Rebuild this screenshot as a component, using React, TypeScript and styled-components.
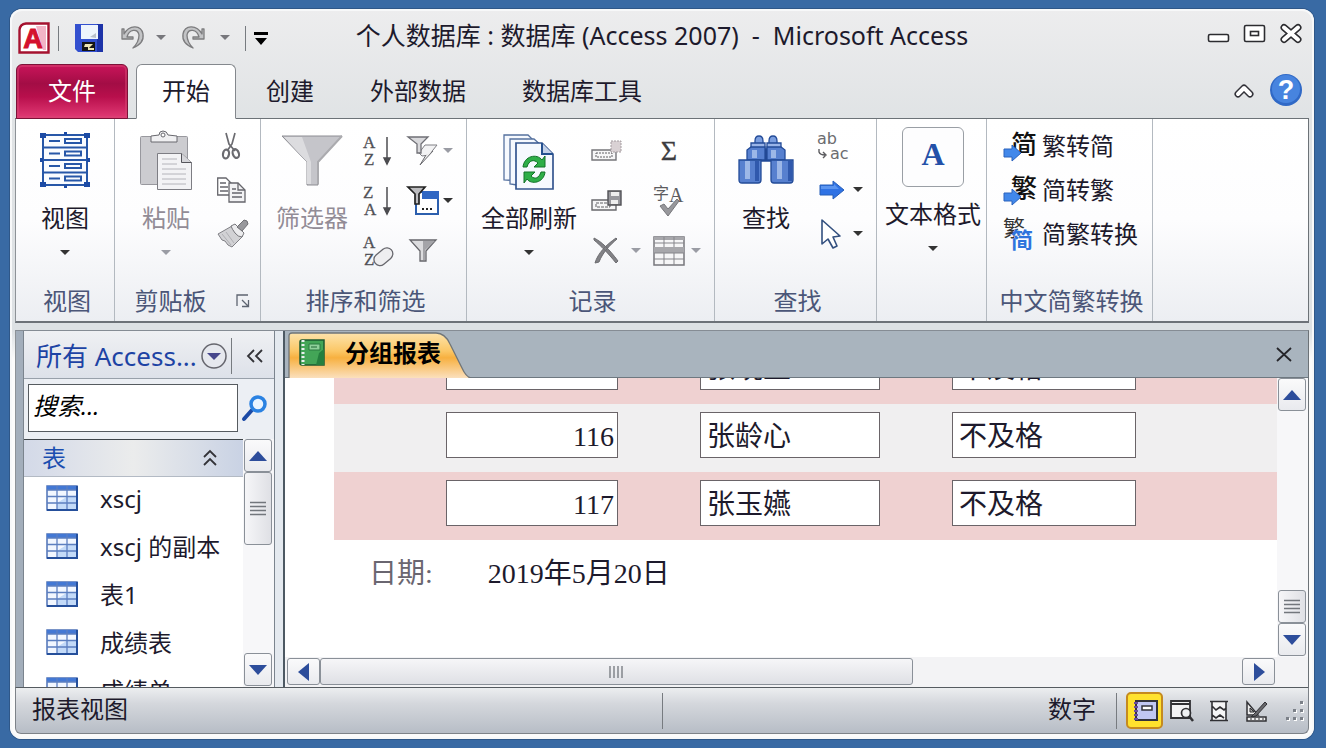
import React from "react";
import styled, { createGlobalStyle, css } from "styled-components";

const sans = `"Noto Sans", "Noto Sans CJK SC", sans-serif`;
const reportFont = `"Liberation Serif", "Noto Sans CJK SC", serif`;
const ink = "#1d1a2c";
const navy = "#4b5678";
const muted = "#928c96";

const GlobalStyle = createGlobalStyle`
  *, *::before, *::after { box-sizing: border-box; }
  body { margin: 0; font-family: ${sans}; font-size: 24px; line-height: 32px; color: ${ink}; }
  button, input { font: inherit; color: inherit; }
  svg { display: block; flex: none; overflow: visible; }
`;

const Desktop = styled.main`
  height: 100vh;
  display: flex;
  padding: 9px 12px 9px 10px;
  background: #396aa4;
`;

const Window = styled.div`
  flex: 1;
  min-width: 0;
  display: flex;
  flex-direction: column;
  padding: 0 5px 5px;
  border-radius: 12px;
  background: linear-gradient(#ededee, #e0e3e5 110px, #dde1e4 322px, #fbfbfb 350px);
  box-shadow: 0 0 0 1px #2f5788, inset 0 0 0 2px #f7f8f9;
  overflow: hidden;
`;

const plainButton = css`
  display: inline-flex;
  align-items: center;
  justify-content: center;
  padding: 0;
  border: 0;
  background: none;
  cursor: pointer;
`;

const IconButton = styled.button<{ $width?: number }>`
  ${plainButton}
  width: ${(p) => (p.$width ? `${p.$width}px` : "auto")};
`;

/* ---------- title bar ---------- */

const TitleBar = styled.header`
  flex: none;
  height: 55px;
  display: grid;
  grid-template-columns: 1fr auto 1fr;
  align-items: center;
`;

const QuickAccess = styled.div`
  display: flex;
  align-items: center;
  padding: 3px 0 0 3px;
  gap: 8px;
`;

const Separator = styled.span<{ $height: number; $before?: number; $after?: number }>`
  flex: none;
  width: 1px;
  height: ${(p) => p.$height}px;
  margin: 0 ${(p) => p.$after ?? 0}px 0 ${(p) => p.$before ?? 0}px;
  background: #777b80;
`;

const Title = styled.h1`
  margin: 0;
  padding-bottom: 4px;
  font-size: 25px;
  font-weight: 400;
  white-space: nowrap;
`;

const WindowControls = styled.div`
  display: flex;
  justify-content: flex-end;
  align-items: center;
  gap: 12px;
  padding: 0 6px 6px 0;
`;

/* ---------- ribbon tabs ---------- */

const TabRow = styled.nav`
  flex: none;
  height: 55px;
  display: flex;
  padding-left: 1px;
  box-shadow: inset 0 -1px 0 #6c7277;
`;

const FileTab = styled.button`
  ${plainButton}
  width: 112px;
  margin-right: 8px;
  padding-bottom: 2px;
  color: #fff;
  border: 1px solid #7c1238;
  border-radius: 6px 6px 0 0;
  background: linear-gradient(#c9145a, #a30d45 35%, #b80f4c 60%, #e23a75);
  box-shadow: inset 0 0 0 2px #d8457480;
`;

const Tab = styled.button<{ $active?: boolean }>`
  ${plainButton}
  padding: 0 28px 2px;
  ${(p) =>
    p.$active &&
    css`
      padding: 0 25px 2px;
      margin-right: 2px;
      border: 1px solid #84888d;
      border-bottom-color: #fff;
      border-radius: 6px 6px 0 0;
      background: #fff;
    `}
`;

const TabTools = styled.div`
  margin-left: auto;
  display: flex;
  align-items: center;
  gap: 16px;
  padding: 0 7px 4px 0;
`;

/* ---------- ribbon ---------- */

const Ribbon = styled.section`
  flex: none;
  height: 204px;
  display: flex;
  background: linear-gradient(#fff, #fdfdfe 50%, #eceef2);
  border-right: 1px solid #6c7277;
  border-left: 1px solid #8d9297;
  border-bottom: 2px solid #6d7278;
`;

const Group = styled.section<{ $width: number }>`
  flex: none;
  width: ${(p) => p.$width}px;
  display: flex;
  flex-direction: column;
  border-right: 1px solid #b3b9c0;
`;

const GroupBody = styled.div`
  flex: 1;
  display: flex;
  align-items: flex-start;
`;

const GroupLabel = styled.div<{ $launcher?: boolean }>`
  height: 36px;
  display: flex;
  align-items: center;
  justify-content: center;
  gap: 10px;
  padding: 0 ${(p) => (p.$launcher ? "10px 4px 0" : "0 4px 4px")};
  color: ${navy};
  white-space: nowrap;

  span {
    flex: 1;
    text-align: center;
  }
`;

const BigButton = styled.button<{ $width: number; $raised?: boolean; $muted?: boolean }>`
  ${plainButton}
  flex: none;
  width: ${(p) => p.$width}px;
  flex-direction: column;
  justify-content: flex-start;
  padding-top: ${(p) => (p.$raised ? 8 : 12)}px;
  color: ${(p) => (p.$muted ? muted : ink)};
  white-space: nowrap;

  span {
    margin: 11px 0 16px;
  }
`;

const SmallColumn = styled.div<{ $row: number; $gap?: number }>`
  flex: none;
  margin-left: ${(p) => p.$gap ?? 0}px;
  padding-top: ${(p) => (p.$row === 50 ? 7 : 5)}px;
  display: flex;
  flex-direction: column;

  button {
    height: ${(p) => p.$row}px;
    justify-content: flex-start;
    gap: 4px;
  }
`;

const FormatFrame = styled.span`
  && {
    width: 62px;
    height: 60px;
    margin: 0;
    padding-bottom: 6px;
    display: grid;
    place-items: center;
    border: 1px solid #9a9fa5;
    border-radius: 6px;
    background: #fdfdfe;
    font: 700 32px/32px "Liberation Serif", serif;
    color: #2450a8;
  }
`;

const ConvertButton = styled.button`
  ${plainButton}
  white-space: nowrap;
`;

/* ---------- work area ---------- */

const Work = styled.div`
  flex: 1;
  min-height: 0;
  display: flex;
  margin-top: 7px;
  border-top: 1px solid #858c94;
  border-right: 1px solid #6c7277;
  border-left: 1px solid #8d9297;
`;

const NavPane = styled.aside`
  flex: none;
  width: 269px;
  display: flex;
  padding: 0 8px 0 7px;
  background: linear-gradient(90deg, #a3aebb 0 7px, #e4e9ef 7px);
  border-right: 2px solid #4d5963;
`;

const NavInner = styled.div`
  flex: 1;
  min-width: 0;
  display: flex;
  flex-direction: column;
  border: solid #7b848e;
  border-width: 0 1px;
  background: #eceff4;
`;

const NavHeader = styled.div`
  flex: none;
  height: 48px;
  display: flex;
  align-items: center;
  padding: 2px 0 0 12px;
  gap: 4px;
  font-size: 26px;
  color: #1d43a4;
  background: linear-gradient(#eff0f3, #dde1e9);
  border-bottom: 1px solid #98a0aa;
  white-space: nowrap;
`;

const SearchRow = styled.form`
  flex: none;
  display: flex;
  align-items: center;
  height: 60px;
  padding: 0 0 2px 4px;
  gap: 4px;
`;

const SearchInput = styled.input`
  width: 210px;
  height: 48px;
  padding: 0 4px 6px;
  border: 1px solid #565b60;
  border-radius: 0;
  background: #fff;
  outline: 0;

  &::placeholder {
    color: #000;
    font-style: italic;
    opacity: 1;
  }
`;

const NavList = styled.div`
  flex: 1;
  min-height: 0;
  display: flex;
`;

const Objects = styled.div`
  flex: 1;
  min-width: 0;
  overflow: hidden;
  background: #fff;
  border-top: 1px solid #3f454a;
`;

const ObjectGroup = styled.button`
  ${plainButton}
  width: 100%;
  height: 37px;
  justify-content: space-between;
  padding: 0 26px 0 18px;
  color: #1b4eb0;
  background: linear-gradient(90deg, #d3d9e8, #ebecec 50%, #c9d2e4);
  border-bottom: 1px solid #b3bac4;
`;

const ObjectList = styled.ul`
  margin: 0;
  padding: 0;
  list-style: none;
`;

const ObjectLink = styled.a`
  display: flex;
  align-items: center;
  gap: 22px;
  height: 48px;
  padding: 0 0 6px 22px;
  color: inherit;
  text-decoration: none;
  white-space: nowrap;

  span {
    padding-top: 2px;
  }
`;

/* ---------- scroll bars ---------- */

const ScrollBar = styled.div<{ $horizontal?: boolean }>`
  flex: none;
  display: flex;
  flex-direction: ${(p) => (p.$horizontal ? "row" : "column")};
  ${(p) => (p.$horizontal ? "height: 30px; padding: 1px 33px 2px 2px;" : "width: 31px; padding: 0 2px 1px 1px;")}
  background: ${(p) => (p.$horizontal ? "#f3f3f5" : "#f7f7f9")};
`;

const ScrollButton = styled.button`
  ${plainButton}
  flex: none;
  height: 33px;
  border: 1px solid #8a9098;
  border-radius: 3px;
  background: linear-gradient(#fafafb, #e9eaee);
`;

const SideButton = styled(ScrollButton)`
  width: 33px;
  height: 27px;
`;

const Thumb = styled.div<{ $length: string; $horizontal?: boolean }>`
  flex: none;
  display: grid;
  place-items: center;
  ${(p) => (p.$horizontal ? `width: ${p.$length};` : `height: ${p.$length};`)}
  border: 1px solid #8a9098;
  border-radius: 3px;
  background: linear-gradient(${(p) => (p.$horizontal ? "180deg" : "90deg")}, #f6f6f8, #dfe0e5);
`;

const Spring = styled.div`
  flex: 1;
`;

/* ---------- document ---------- */

const Document = styled.section`
  flex: 1;
  min-width: 0;
  display: flex;
  flex-direction: column;
  background: #fff;
`;

const DocTabs = styled.div`
  flex: none;
  height: 47px;
  display: flex;
  justify-content: space-between;
  padding: 1px 16px 0 4px;
  background: #a9b4be;
  border-bottom: 1px solid #6e7880;
`;

const DocTab = styled.button`
  ${plainButton}
  display: grid;
  justify-content: start;
  width: 182px;
  height: 46px;
  font-weight: 700;
  color: #000;

  > * {
    grid-area: 1 / 1;
  }
`;

const DocTabFace = styled.span`
  display: flex;
  align-items: center;
  gap: 20px;
  padding: 0 0 5px 10px;
  white-space: nowrap;
`;

const Viewport = styled.div`
  flex: 1;
  min-height: 0;
  display: flex;
`;

const Page = styled.div`
  flex: 1;
  min-width: 0;
  display: flex;
  flex-direction: column;
  justify-content: flex-end;
  padding-left: 49px;
  overflow: hidden;
  font-family: ${reportFont};
  font-size: 28px;
`;

const ReportTable = styled.table`
  flex: none;
  width: 100%;
  table-layout: fixed;
  border-collapse: collapse;
`;

const ReportRow = styled.tr`
  height: 68px;
  background: #f0eff0;

  &:nth-child(odd) {
    background: #efd1d1;
  }
`;

const Cell = styled.td<{ $lead: number; $right?: boolean }>`
  padding: 8px 0 14px ${(p) => p.$lead}px;
  text-align: ${(p) => (p.$right ? "right" : "left")};
`;

const Field = styled.div<{ $right?: boolean }>`
  height: 46px;
  padding: 8px ${(p) => (p.$right ? 3 : 6)}px 0;
  border: 1px solid #6a6468;
  background: #fff;
  white-space: nowrap;
`;

const ReportFooter = styled.dl`
  flex: none;
  display: flex;
  gap: 55px;
  height: 117px;
  margin: 0;
  padding: 18px 35px;

  dt {
    color: #6a6670;
  }

  dd {
    margin: 0;
  }
`;

/* ---------- status bar ---------- */

const StatusBar = styled.footer`
  flex: none;
  height: 47px;
  display: flex;
  align-items: center;
  border: 1px solid #7d8288;
  border-top-color: #555b60;
  border-radius: 0 0 6px 6px;
  background: linear-gradient(#eceef0, #d4d7dc 35%, #b7bdc6);
`;

const StatusHalf = styled.div<{ $end?: boolean }>`
  flex: 1;
  display: flex;
  align-items: center;
  justify-content: ${(p) => (p.$end ? "flex-end" : "flex-start")};

  > span:first-child {
    padding: 0 0 4px 16px;
  }
`;

const ViewButton = styled.button<{ $active?: boolean }>`
  ${plainButton}
  width: 37px;
  height: 37px;
  ${(p) =>
    p.$active &&
    css`
      border: 2px solid #c58a1f;
      border-radius: 5px;
      background: #ffe22e;
    `}
`;

/* ---------- icons ---------- */

const Caret = ({ color = "#333" }: { color?: string }) => (
  <svg width="10" height="6" viewBox="0 0 10 6"><path d="M0 0h10L5 5z" fill={color} /></svg>
);

const AccessLogo = () => (
  <svg width="32" height="32" viewBox="0 0 32 32">
    <path d="M8 1.500H30.500V30.500H1.500V8Q2 2 8 1.500Z" fill="#fff" stroke="#a5122f" strokeWidth="2.400" />
    <path d="M18 4h10v24h-3z" fill="#f3b4c6" />
    <text x="15" y="26" textAnchor="middle" fontFamily="Liberation Sans, sans-serif" fontWeight="700" fontSize="27" fill="#d4112d" stroke="#d4112d">A</text>
  </svg>
);

const SaveIcon = () => (
  <svg width="28" height="28" viewBox="0 0 28 28">
    <path d="M0 0h28v28H3l-3-3z" fill="#3350cf" />
    <path d="M22 0h6v28h-6z" fill="#1d33a8" />
    <path d="M6 1h17v14H6z" fill="#eef4fc" />
    <path d="M15 13l6-4v5z" fill="#b8bfca" />
    <path d="M7 18h13v9H7z" fill="#151515" />
    <path d="M10 20h8l-4 4h5v2h-6v-3H9z" fill="#efe7b4" />
  </svg>
);

const UndoIcon = ({ flip = false }: { flip?: boolean }) => (
  <svg width="24" height="26" viewBox="0 0 24 26">
    <g transform={flip ? "matrix(-1 0 0 1 24 0)" : undefined} stroke="#7d7d7f" strokeWidth="1.300" fill="#c3c4c6" strokeLinejoin="round">
      <path d="M1 4v10h11v-2H6C8 4 17 3 18 10c0 6-2 9-6 13 7-3 11-8 10-14C20-1 8 0 3 9V4z" />
    </g>
  </svg>
);

const CustomizeIcon = () => (
  <svg width="14" height="13" viewBox="0 0 14 13"><path d="M0 0h14v3H0zM1 6h12l-6 7z" fill="#000" /></svg>
);

const MinimizeIcon = () => (
  <svg width="24" height="20" viewBox="0 0 24 20"><rect x="1.500" y="10.500" width="20" height="7" rx="1.500" fill="#fff" stroke="#2c2c30" strokeWidth="1.600" /></svg>
);
const MaximizeIcon = () => (
  <svg width="24" height="20" viewBox="0 0 24 20">
    <rect x="1.500" y="1.500" width="20" height="16" rx="1.500" fill="#fff" stroke="#2c2c30" strokeWidth="1.600" />
    <rect x="7.500" y="7.500" width="8" height="4" fill="#fff" stroke="#2c2c30" strokeWidth="1.600" />
  </svg>
);
const CloseIcon = () => (
  <svg width="24" height="20" viewBox="0 0 24 20">
    <path d="M5 3.500l14 12M19 3.500l-14 12" stroke="#2c2c30" strokeWidth="7" strokeLinecap="round" />
    <path d="M5 3.500l14 12M19 3.500l-14 12" stroke="#fff" strokeWidth="4" strokeLinecap="round" />
  </svg>
);
const CollapseIcon = () => (
  <svg width="20" height="16" viewBox="0 0 20 16">
    <path d="M4 12l6-6 6 6" fill="none" stroke="#33333a" strokeWidth="7" strokeLinecap="round" strokeLinejoin="round" />
    <path d="M4 12l6-6 6 6" fill="none" stroke="#fff" strokeWidth="4" strokeLinecap="round" strokeLinejoin="round" />
  </svg>
);
const HelpIcon = () => (
  <svg width="32" height="32" viewBox="0 0 32 32">
    <circle cx="16" cy="16" r="16" fill="#3069c6" />
    <circle cx="16" cy="15" r="14" fill="#4784df" />
    <text x="16" y="25" textAnchor="middle" fontFamily="Liberation Sans, sans-serif" fontWeight="700" fontSize="27" fill="#fff">?</text>
  </svg>
);

const ViewIcon = () => (
  <svg width="50" height="60" viewBox="0 0 50 60">
    <g fill="none" stroke="#2757a8" strokeWidth="2">
      <path d="M3 4h44v50H3zM3 16.500h44M3 29h44M3 41.500h44" fill="#fafcff" />
      <path d="M9 10h11M9 22.500h11M9 35h11M9 47.500h11" />
      <path d="M25 8h16v4H25zM25 20.500h16v4H25zM25 33h16v4H25zM25 45.500h16v4H25z" />
    </g>
    <path d="M0 2h6v5H0zM44 2h6v5h-6zM0 51h6v5H0zM44 51h6v5h-6zM24 1h3v3h-3zM24 54h3v3h-3zM0 27h3v4H0zM47 27h3v4h-3z" fill="#1c4ba5" />
  </svg>
);

const PasteIcon = () => (
  <svg width="52" height="60" viewBox="0 0 52 60">
    <rect x=".5" y="5.500" width="47" height="48" rx="1" fill="#ccccd0" stroke="#98989e" />
    <path d="M11 11V5l8-1q0-4 4-4t5 4l9 1v6z" fill="#f0f0f2" stroke="#68686e" />
    <circle cx="23" cy="4" r="2" fill="#fff" stroke="#68686e" />
    <path d="M17.500 22.500h24l10 9v27h-34z" fill="#f3f3f5" stroke="#7d7d83" />
    <path d="M41.500 22.500v9h10" fill="#d5d5d9" stroke="#55555b" />
    <path d="M22 28h15M22 33h15M22 38h24M22 43h24M22 48h24M22 53h24" stroke="#b4b4ba" />
  </svg>
);

const CutIcon = () => (
  <svg width="28" height="28" viewBox="0 0 28 28">
    <g fill="none" stroke="#6b6b70" strokeWidth="1.700">
      <path d="M9 1l3 11 6 7M18 1l-3 11-5 7" />
      <ellipse cx="9" cy="22" rx="3" ry="4.500" transform="rotate(10 9 22)" strokeWidth="2.200" />
      <ellipse cx="19" cy="21.500" rx="3" ry="4.500" transform="rotate(-20 19 22)" strokeWidth="2.200" />
    </g>
  </svg>
);
const CopyIcon = () => (
  <svg width="28" height="26" viewBox="0 0 28 26">
    <g stroke="#66666c" strokeWidth="1.300">
      <path d="M.7 1H9l5 5v12H.7z" fill="#fff" />
      <path d="M3 6h6M3 10h8M3 14h8" />
      <path d="M12 6h9l7 7v12H12z" fill="#f2f2f4" />
      <path d="M21 6v7h7M15 12h4M15 16h10M15 20h10" fill="none" />
    </g>
  </svg>
);
const BrushIcon = () => (
  <svg width="32" height="28" viewBox="0 0 32 28">
    <path d="M15 6l11 10-11 11-4-2-3-4-3-1-4-6z" fill="#d2d2d5" stroke="#808085" strokeLinejoin="round" />
    <path d="M5 14l9 11M9 12l8 11" stroke="#b0b0b4" />
    <path d="M14 6l4-2 9 9-2 4q-4 0-7-4t-4-7z" fill="#ececee" stroke="#77777c" />
    <path d="M20 7l7-7q4 0 4 4l-6 7z" fill="#98989c" stroke="#707075" />
  </svg>
);
const LauncherIcon = () => (
  <svg width="14" height="14" viewBox="0 0 14 14"><path d="M1 12V1h11M6 6l6 6M12.500 6v6.500H6" fill="none" stroke="#5d6470" strokeWidth="1.300" /></svg>
);

const BigFunnel = () => (
  <svg width="62" height="60" viewBox="0 0 62 60">
    <path d="M1 5h60L37 31v23H26V31z" fill="#c5c5ca" stroke="#8c8c92" />
    <path d="M3 6h18l9 25v22h-4V31z" fill="#dcdcdf" />
    <path d="M61 5L37 31v22" fill="none" stroke="#ababaf" strokeWidth="2" />
  </svg>
);

const SortIcon = ({ top, bottom, erase = false }: { top: string; bottom: string; erase?: boolean }) => (
  <svg width="32" height="34" viewBox="0 0 32 34">
    <g fontFamily="Liberation Serif, serif" fontSize="17" fill="#515156" stroke="#515156" strokeWidth=".3">
      <text x="0" y="14">{top}</text>
      <text x="1" y="31">{bottom}</text>
    </g>
    {erase ? (
      <rect x="10" y="17" width="21" height="12" rx="6" transform="rotate(-40 20 23)" fill="#eeeef0" stroke="#68686e" strokeWidth="1.300" />
    ) : (
      <path d="M24 3v25M21 24l3 6 3-6z" fill="#4c4c50" stroke="#4c4c50" strokeWidth="1.500" />
    )}
  </svg>
);

const SelectionFilterIcon = () => (
  <svg width="32" height="30" viewBox="0 0 32 30">
    <path d="M12 17l6-8h12l-8 10-7 1z" fill="#f3f3f4" stroke="#808085" />
    <path d="M26 15L13 29l6-10" fill="#eee" stroke="#69696e" />
    <path d="M1 1h20l-7 7v9h-4V8z" fill="#d9d9dc" stroke="#6f6f75" strokeWidth="1.300" />
  </svg>
);
const AdvancedFilterIcon = () => (
  <svg width="32" height="30" viewBox="0 0 32 30">
    <rect x="9" y="6" width="22" height="22" fill="#fff" stroke="#2c5fae" strokeWidth="2" />
    <path d="M15 5h17v8H15z" fill="#2f66c3" />
    <path d="M15 22h2v2h-2zM19 22h2v2h-2zM23 22h2v2h-2z" fill="#222" />
    <path d="M1 1h17l-6 7v10H8V8z" fill="#bcbcbf" stroke="#222" strokeWidth="1.700" />
  </svg>
);
const SmallFunnel = () => (
  <svg width="32" height="24" viewBox="0 0 32 24">
    <path d="M3 1h26L19 12v10h-6V12z" fill="#dcdcde" stroke="#66666b" strokeWidth="1.300" />
    <path d="M16 2h12L18 11v10h-2z" fill="#a4a4a8" />
  </svg>
);

const RefreshAllIcon = () => (
  <svg width="52" height="60" viewBox="0 0 52 60">
    <g fill="#f6f9fe" stroke="#55719f" strokeWidth="1.300">
      <path d="M1 4h24l10 10v38l-9-2-25-1z" />
      <path d="M7 8h24l10 9v37H14l-7-1z" />
      <path d="M13 12h26l11 11v35H13z" stroke="#34558f" strokeWidth="1.700" />
      <path d="M39 12v11h11" fill="#c3d1e8" stroke="#24508f" strokeWidth="2" />
    </g>
    <g fill="#2eae48" stroke="#127329">
      <path d="M20 36c1-11 14-14 19-7l3-4v11H31l4-4c-4-4-9-3-11 4z" />
      <path d="M42 41c-1 11-14 13-18 7l-3 4V41h11l-4 4c4 4 8 2 10-4z" />
    </g>
  </svg>
);

const NewRecordIcon = () => (
  <svg width="32" height="24" viewBox="0 0 32 24">
    <path d="M1 11h24v10H1z" fill="#f6f6f7" stroke="#75757a" strokeWidth="1.400" />
    <path d="M5 14h16v4H5z" fill="none" stroke="#606065" strokeDasharray="2 1" />
    <path d="M20 2h10v11H20z" fill="#d9d1d4" stroke="#a49ca0" strokeDasharray="2 1" />
  </svg>
);
const SaveRecordIcon = () => (
  <svg width="32" height="24" viewBox="0 0 32 24">
    <path d="M1 11h24v10H1z" fill="#f6f6f7" stroke="#68686c" strokeWidth="1.400" />
    <path d="M5 14h14v4H5z" fill="none" stroke="#606065" strokeDasharray="3 1" />
    <path d="M17 2h13v14H17z" fill="#98989d" stroke="#515156" strokeWidth="1.400" />
    <path d="M20 3h8v4h-8zM20 11h7v4h-7z" fill="#eee" />
  </svg>
);
const DeleteIcon = () => (
  <svg width="36" height="28" viewBox="0 0 36 28">
    <path d="M3 1c8 4 15 11 24 23l-2 2C17 16 10 9 3 3zM26 2C19 8 12 15 8 25l-4 1C7 16 15 8 25 1z" fill="#828286" stroke="#6c6c70" />
  </svg>
);
const SumIcon = () => (
  <svg width="32" height="30" viewBox="0 0 32 30">
    <text x="16" y="24" textAnchor="middle" fontFamily="Liberation Serif, serif" fontSize="28" fill="#3c3c40" stroke="#3c3c40" strokeWidth=".3">Σ</text>
  </svg>
);
const SpellIcon = () => (
  <svg width="32" height="32" viewBox="0 0 32 32">
    <text x="0" y="14" fontFamily="Noto Sans CJK SC, sans-serif" fontSize="16" fill="#5c5c60">字</text>
    <text x="16" y="17" fontFamily="Liberation Serif, serif" fontSize="20" fill="#5c5c60">A</text>
    <path d="M7 21l4-2 4 5 9-10 2 2-11 15z" fill="#98989c" stroke="#77777b" />
  </svg>
);
const MoreIcon = () => (
  <svg width="34" height="30" viewBox="0 0 34 30">
    <path d="M1 1h30v28H1z" fill="#f6f6f7" stroke="#77777c" strokeWidth="1.500" />
    <path d="M1 1h30v3H1zM1 11h30v6H1z" fill="#a7a7ab" />
    <path d="M1 7h30M1 17h30M1 23h30M11 1v10M21 1v10M11 17v12M21 17v12" stroke="#85858a" />
  </svg>
);

const BinocularsIcon = () => (
  <svg width="56" height="60" viewBox="0 0 56 60">
    <g stroke="#234b98" strokeWidth="1.300" fill="#5780cf">
      <path d="M22 18h12v12H22z" fill="#23468e" />
      <path d="M17 10q0-5 4-5t4 5v4h-8zM31 10q0-5 4-5t4 5v4h-8z" fill="#7b9edf" />
      <path d="M13 12h14v5H13zM29 12h14v5H29z" fill="#9ab5e8" />
      <path d="M9 29V19l4-3h14v13zM47 29V19l-4-3H29v13z" />
      <path d="M1 29h22v20q0 3-3 3H4q-3 0-3-3zM33 29h22v20q0 3-3 3H36q-3 0-3-3z" />
    </g>
    <path d="M7 30h5v18H7zM39 30h5v18h-5zM14 19h5v8h-5zM33 19h5v8h-5z" fill="#b3c9ef" opacity=".75" />
    <path d="M17 30h4v20h-4zM50 30h4v20h-4z" fill="#3059ad" />
  </svg>
);
const ReplaceIcon = () => (
  <svg width="32" height="32" viewBox="0 0 32 32">
    <g fontFamily="DejaVu Sans, sans-serif" fontSize="16" fill="#6c6c70">
      <text x="0" y="14">ab</text>
      <text x="13" y="29">ac</text>
    </g>
    <path d="M2 19v3q1 3 6 3M6 22l3 3-3 3" fill="none" stroke="#5c5c60" strokeWidth="1.400" />
  </svg>
);
const GotoIcon = () => (
  <svg width="32" height="20" viewBox="0 0 32 20">
    <path d="M3 5h13V1l11 9-11 9v-4H3z" fill="#2f72e4" stroke="#275eb8" />
    <path d="M4 6h13V4l5 5H4z" fill="#5b95f0" />
  </svg>
);
const PointerIcon = () => (
  <svg width="32" height="32" viewBox="0 0 32 32">
    <path d="M5 2v24l6-5 5 9 4-2-4-9 7-1z" fill="#fff" stroke="#33507f" strokeWidth="1.600" strokeLinejoin="round" />
  </svg>
);

const ConvertIcon = ({ glyph }: { glyph: string }) => (
  <svg width="36" height="36" viewBox="0 0 36 36">
    <text x="9" y="26" fontFamily="Noto Sans CJK SC, sans-serif" fontWeight="500" fontSize="26" fill="#111">{glyph}</text>
    <path d="M2 21h8v-4l9 8-9 8v-4H2z" fill="#4288ea" stroke="#2b63bd" />
  </svg>
);
const ConvertBothIcon = () => (
  <svg width="36" height="36" viewBox="0 0 36 36">
    <text x="1" y="20" fontFamily="Noto Sans CJK SC, sans-serif" fontSize="22" fill="#333">繁</text>
    <path d="M12 14h18v20H12z" fill="#fff" opacity=".6" />
    <text x="9" y="32" fontFamily="Noto Sans CJK SC, sans-serif" fontWeight="700" fontSize="22" fill="#2f74dd">简</text>
  </svg>
);

const DropCircle = () => (
  <svg width="26" height="26" viewBox="0 0 26 26">
    <circle cx="13" cy="13" r="12" fill="#e6e8ee" stroke="#66666e" strokeWidth="1.500" />
    <path d="M6 10h14l-7 7z" fill="#46468c" />
  </svg>
);
const ChevronsLeft = () => (
  <svg width="18" height="14" viewBox="0 0 18 14"><path d="M8 1L2 7l6 6M16 1l-6 6 6 6" fill="none" stroke="#333338" strokeWidth="1.800" /></svg>
);
const ChevronsUp = () => (
  <svg width="14" height="16" viewBox="0 0 14 16"><path d="M1 7l6-6 6 6M1 15l6-6 6 6" fill="none" stroke="#333338" strokeWidth="1.800" /></svg>
);
const SearchIcon = () => (
  <svg width="26" height="26" viewBox="0 0 26 26">
    <path d="M2 24l8-9" stroke="#1c4aa6" strokeWidth="4" strokeLinecap="round" />
    <circle cx="16" cy="9" r="7" fill="#eaf4ff" stroke="#2b82e2" strokeWidth="3.500" />
  </svg>
);
const TableIcon = () => (
  <svg width="32" height="26" viewBox="0 0 32 26">
    <path d="M1 1h30v24H1z" fill="#f2f7ff" stroke="#4e71b6" strokeWidth="1.500" />
    <path d="M1 1h30v4H1z" fill="#4378d4" />
    <path d="M22 11h9v14H11v-7z" fill="#c3daf8" />
    <path d="M1 5h30M1 11.500h30M1 18h30M11 1v24M21 1v24" stroke="#5c7fc0" strokeWidth="1.300" />
    <path d="M31 1v24H1" fill="none" stroke="#254f9b" strokeWidth="2" />
  </svg>
);

const triangles = { up: "M0 12L9 2l9 10z", down: "M0 2h18L9 12z", left: "M14 0v18L3 9z", right: "M4 0v18l11-9z" };
const Triangle = ({ dir }: { dir: keyof typeof triangles }) => (
  <svg width="18" height={dir === "up" || dir === "down" ? 14 : 18}><path d={triangles[dir]} fill="#2d4d9b" /></svg>
);
const Grip = ({ upright = false }: { upright?: boolean }) => (
  <svg width="16" height="16" viewBox="0 0 16 16">
    <path d={upright ? "M2 2v12M6 2v12M10 2v12M14 2v12" : "M0 1.500h16M0 5.500h16M0 9.500h16M0 13.500h16"} stroke="#72767c" strokeWidth="1.300" />
  </svg>
);

const DocTabShape = () => (
  <svg width="182" height="46" viewBox="0 0 182 46">
    <defs>
      <linearGradient id="tabFill" x1="0" y1="0" x2="0" y2="1">
        <stop offset="0" stopColor="#fde3ab" />
        <stop offset=".4" stopColor="#fbc766" />
        <stop offset=".55" stopColor="#f7b040" />
        <stop offset="1" stopColor="#fbe0bd" />
      </linearGradient>
    </defs>
    <path d="M0 46V4q0-3 3-3h144q9 0 14 11l12 24q4 9 9 10z" fill="url(#tabFill)" />
    <path d="M0 46V4q0-3 3-3h144q9 0 14 11l12 24q4 9 9 10" fill="none" stroke="#707578" strokeWidth="1.300" />
  </svg>
);
const ReportIcon = () => (
  <svg width="26" height="28" viewBox="0 0 26 28">
    <path d="M3 1h22v25H3q-2 0-2-2V3q0-2 2-2z" fill="#43a557" stroke="#1c5a32" strokeWidth="1.500" />
    <path d="M4 1v25" stroke="#ebeff0" strokeWidth="3" strokeDasharray="2 2" />
    <path d="M10 5h11v6H10z" fill="#8fd09a" stroke="#2a7a40" />
    <path d="M12 8h6" stroke="#1f6634" />
    <path d="M20 14l5-4v16h-8z" fill="#257f3e" />
  </svg>
);
const DocCloseIcon = () => (
  <svg width="16" height="14" viewBox="0 0 16 14"><path d="M1 0l14 13M15 0L1 13" stroke="#25252a" strokeWidth="1.800" /></svg>
);

const ReportViewIcon = () => (
  <svg width="26" height="22" viewBox="0 0 26 22">
    <path d="M4 1h21v19H4z" fill="#c1c7f2" stroke="#33333b" strokeWidth="2" />
    <path d="M4 2v18" stroke="#694ca0" strokeWidth="4" strokeDasharray="2 2" />
    <path d="M10 6h10v4H10z" fill="#fff" stroke="#33333b" strokeWidth="1.500" />
  </svg>
);
const PreviewIcon = () => (
  <svg width="26" height="22" viewBox="0 0 26 22">
    <path d="M2 1h19v17H2zM2 4h19" fill="#f2f2f4" stroke="#303034" strokeWidth="1.800" />
    <circle cx="17" cy="13" r="4.500" fill="#eef0f2" stroke="#303034" strokeWidth="1.700" />
    <path d="M20 16l4 5" stroke="#303034" strokeWidth="2.500" />
  </svg>
);
const LayoutIcon = () => (
  <svg width="22" height="22" viewBox="0 0 22 22">
    <path d="M4 1h14v20H4z" fill="#f5f5f6" />
    <path d="M2 1.500h18M2 20.500h18M4 1v20M18 1v20M4 6l4 4 4-3 4 3 2-2M4 15l4 3 4-3 4 3" fill="none" stroke="#303034" strokeWidth="1.600" />
  </svg>
);
const DesignIcon = () => (
  <svg width="22" height="22" viewBox="0 0 22 22">
    <path d="M2 2v13h11z" fill="#eee" stroke="#303034" strokeWidth="1.500" />
    <path d="M5 8v4h4z" fill="#aaa" stroke="#303034" />
    <path d="M20 2L10 13l-4 4 5-1L22 4z" fill="#68686c" stroke="#303034" />
    <path d="M2 17h19v4H2z" fill="#eee" stroke="#303034" strokeWidth="1.500" />
    <path d="M6 18v2M10 18v2M14 18v2M18 18v2" stroke="#303034" />
  </svg>
);
const ResizeGrip = () => (
  <svg width="22" height="22" viewBox="0 0 22 22">
    {[[20, 1], [13, 9], [20, 9], [6, 17], [13, 17], [20, 17]].map(([x, y]) => (
      <g key={`${x}-${y}`}>
        <rect x={x + 1} y={y + 1} width="3" height="3" fill="#fff" />
        <rect x={x} y={y} width="3" height="3" fill="#7b8088" />
      </g>
    ))}
  </svg>
);

/* ---------- data ---------- */

const objects = ["xscj", "xscj 的副本", "表1", "成绩表", "成绩单"];
const rows = [
  { id: 115, name: "张晓玉", grade: "不及格" },
  { id: 116, name: "张龄心", grade: "不及格" },
  { id: 117, name: "张玉嬿", grade: "不及格" },
];

const softCaret = "#9a9ca4";

export default function App() {
  return (
    <Desktop>
      <GlobalStyle />
      <Window>
        <TitleBar>
          <QuickAccess>
            <AccessLogo />
            <Separator $height={25} />
            <IconButton $width={44} aria-label="保存"><SaveIcon /></IconButton>
            <IconButton $width={28} aria-label="撤消"><UndoIcon /></IconButton>
            <IconButton $width={12} aria-label="撤消列表"><Caret color="#77777c" /></IconButton>
            <IconButton $width={36} aria-label="恢复"><UndoIcon flip /></IconButton>
            <IconButton $width={12} aria-label="恢复列表"><Caret color="#77777c" /></IconButton>
            <Separator $height={25} $before={6} />
            <IconButton aria-label="自定义快速访问工具栏"><CustomizeIcon /></IconButton>
          </QuickAccess>
          <Title>个人数据库 : 数据库 (Access 2007)&nbsp; -&nbsp; Microsoft Access</Title>
          <WindowControls>
            <IconButton aria-label="最小化"><MinimizeIcon /></IconButton>
            <IconButton aria-label="最大化"><MaximizeIcon /></IconButton>
            <IconButton aria-label="关闭"><CloseIcon /></IconButton>
          </WindowControls>
        </TitleBar>

        <TabRow>
          <FileTab>文件</FileTab>
          <Tab $active>开始</Tab>
          <Tab>创建</Tab>
          <Tab>外部数据</Tab>
          <Tab>数据库工具</Tab>
          <TabTools>
            <IconButton aria-label="折叠功能区"><CollapseIcon /></IconButton>
            <IconButton aria-label="帮助"><HelpIcon /></IconButton>
          </TabTools>
        </TabRow>

        <Ribbon>
          <Group $width={99}>
            <GroupBody>
              <BigButton $width={98}><ViewIcon /><span>视图</span><Caret /></BigButton>
            </GroupBody>
            <GroupLabel>视图</GroupLabel>
          </Group>

          <Group $width={146}>
            <GroupBody>
              <BigButton $width={102} $muted><PasteIcon /><span>粘贴</span><Caret color={softCaret} /></BigButton>
              <SmallColumn $row={44}>
                <IconButton aria-label="剪切"><CutIcon /></IconButton>
                <IconButton aria-label="复制"><CopyIcon /></IconButton>
                <IconButton aria-label="格式刷"><BrushIcon /></IconButton>
              </SmallColumn>
            </GroupBody>
            <GroupLabel $launcher>
              <span>剪贴板</span>
              <IconButton aria-label="剪贴板选项"><LauncherIcon /></IconButton>
            </GroupLabel>
          </Group>

          <Group $width={206}>
            <GroupBody>
              <BigButton $width={102} $muted><BigFunnel /><span>筛选器</span></BigButton>
              <SmallColumn $row={50}>
                <IconButton aria-label="升序"><SortIcon top="A" bottom="Z" /></IconButton>
                <IconButton aria-label="降序"><SortIcon top="Z" bottom="A" /></IconButton>
                <IconButton aria-label="取消排序"><SortIcon top="A" bottom="Z" erase /></IconButton>
              </SmallColumn>
              <SmallColumn $row={50} $gap={12}>
                <IconButton aria-label="选择"><SelectionFilterIcon /><Caret color={softCaret} /></IconButton>
                <IconButton aria-label="高级"><AdvancedFilterIcon /><Caret /></IconButton>
                <IconButton aria-label="切换筛选"><SmallFunnel /></IconButton>
              </SmallColumn>
            </GroupBody>
            <GroupLabel>排序和筛选</GroupLabel>
          </Group>

          <Group $width={248}>
            <GroupBody>
              <BigButton $width={124}><RefreshAllIcon /><span>全部刷新</span><Caret /></BigButton>
              <SmallColumn $row={50}>
                <IconButton aria-label="新建"><NewRecordIcon /></IconButton>
                <IconButton aria-label="保存记录"><SaveRecordIcon /></IconButton>
                <IconButton aria-label="删除"><DeleteIcon /><Caret color={softCaret} /></IconButton>
              </SmallColumn>
              <SmallColumn $row={50} $gap={12}>
                <IconButton aria-label="合计"><SumIcon /></IconButton>
                <IconButton aria-label="拼写检查"><SpellIcon /></IconButton>
                <IconButton aria-label="其他"><MoreIcon /><Caret color={softCaret} /></IconButton>
              </SmallColumn>
            </GroupBody>
            <GroupLabel>记录</GroupLabel>
          </Group>

          <Group $width={162}>
            <GroupBody>
              <BigButton $width={102}><BinocularsIcon /><span>查找</span></BigButton>
              <SmallColumn $row={44}>
                <IconButton aria-label="替换"><ReplaceIcon /></IconButton>
                <IconButton aria-label="转至"><GotoIcon /><Caret /></IconButton>
                <IconButton aria-label="选择记录"><PointerIcon /><Caret /></IconButton>
              </SmallColumn>
            </GroupBody>
            <GroupLabel>查找</GroupLabel>
          </Group>

          <Group $width={110}>
            <GroupBody>
              <BigButton $width={112} $raised><FormatFrame>A</FormatFrame><span>文本格式</span><Caret /></BigButton>
            </GroupBody>
          </Group>

          <Group $width={166}>
            <GroupBody>
              <SmallColumn $row={44} $gap={15}>
                <ConvertButton><ConvertIcon glyph="简" />繁转简</ConvertButton>
                <ConvertButton><ConvertIcon glyph="繁" />简转繁</ConvertButton>
                <ConvertButton><ConvertBothIcon />简繁转换</ConvertButton>
              </SmallColumn>
            </GroupBody>
            <GroupLabel>中文简繁转换</GroupLabel>
          </Group>
        </Ribbon>

        <Work>
          <NavPane>
            <NavInner>
              <NavHeader>
                所有 Access...
                <IconButton aria-label="导航选项"><DropCircle /></IconButton>
                <Separator $height={36} />
                <IconButton $width={38} aria-label="折叠导航窗格"><ChevronsLeft /></IconButton>
              </NavHeader>
              <SearchRow>
                <SearchInput aria-label="搜索" placeholder="搜索..." />
                <IconButton type="button" aria-label="开始搜索"><SearchIcon /></IconButton>
              </SearchRow>
              <NavList>
                <Objects>
                  <ObjectGroup>表<ChevronsUp /></ObjectGroup>
                  <ObjectList>
                    {objects.map((name) => (
                      <li key={name}>
                        <ObjectLink href="#"><TableIcon /><span>{name}</span></ObjectLink>
                      </li>
                    ))}
                  </ObjectList>
                </Objects>
                <ScrollBar>
                  <ScrollButton aria-label="向上滚动"><Triangle dir="up" /></ScrollButton>
                  <Thumb $length="73px"><Grip /></Thumb>
                  <Spring />
                  <ScrollButton aria-label="向下滚动"><Triangle dir="down" /></ScrollButton>
                </ScrollBar>
              </NavList>
            </NavInner>
          </NavPane>

          <Document>
            <DocTabs>
              <DocTab>
                <DocTabShape />
                <DocTabFace><ReportIcon />分组报表</DocTabFace>
              </DocTab>
              <IconButton aria-label="关闭报表"><DocCloseIcon /></IconButton>
            </DocTabs>
            <Viewport>
              <Page>
                <ReportTable>
                  <colgroup>
                    <col style={{ width: 284 }} />
                    <col style={{ width: 262 }} />
                    <col style={{ width: 256 }} />
                    <col />
                  </colgroup>
                  <tbody>
                    {rows.map((row) => (
                      <ReportRow key={row.id}>
                        <Cell $lead={112} $right><Field $right>{row.id}</Field></Cell>
                        <Cell $lead={82}><Field>{row.name}</Field></Cell>
                        <Cell $lead={72}><Field>{row.grade}</Field></Cell>
                        <td />
                      </ReportRow>
                    ))}
                  </tbody>
                </ReportTable>
                <ReportFooter>
                  <dt>日期:</dt>
                  <dd>2019年5月20日</dd>
                </ReportFooter>
              </Page>
              <ScrollBar>
                <ScrollButton aria-label="报表向上滚动"><Triangle dir="up" /></ScrollButton>
                <Spring />
                <Thumb $length="33px"><Grip /></Thumb>
                <ScrollButton aria-label="报表向下滚动"><Triangle dir="down" /></ScrollButton>
              </ScrollBar>
            </Viewport>
            <ScrollBar $horizontal>
              <SideButton aria-label="向左滚动"><Triangle dir="left" /></SideButton>
              <Thumb $horizontal $length="60%"><Grip upright /></Thumb>
              <Spring />
              <SideButton aria-label="向右滚动"><Triangle dir="right" /></SideButton>
            </ScrollBar>
          </Document>
        </Work>

        <StatusBar>
          <StatusHalf><span>报表视图</span></StatusHalf>
          <Separator $height={36} />
          <StatusHalf $end>
            <span>数字</span>
            <Separator $height={36} $before={20} $after={9} />
            <ViewButton $active aria-label="报表视图"><ReportViewIcon /></ViewButton>
            <ViewButton aria-label="打印预览"><PreviewIcon /></ViewButton>
            <ViewButton aria-label="布局视图"><LayoutIcon /></ViewButton>
            <ViewButton aria-label="设计视图"><DesignIcon /></ViewButton>
            <IconButton $width={34} aria-label="调整大小"><ResizeGrip /></IconButton>
          </StatusHalf>
        </StatusBar>
      </Window>
    </Desktop>
  );
}
